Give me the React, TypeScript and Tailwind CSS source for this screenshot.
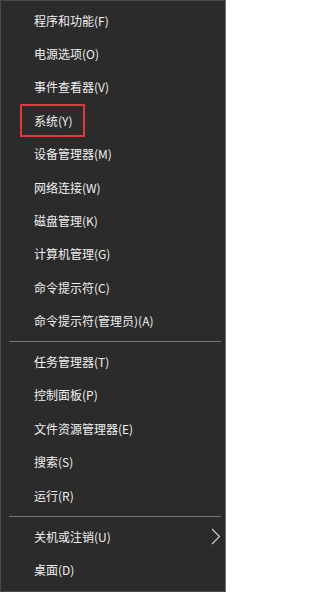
type Entry = { label: string; sub?: boolean; marked?: boolean } | 'sep';

const entries: Entry[] = [
    { label: '程序和功能(F)' },
    { label: '电源选项(O)' },
    { label: '事件查看器(V)' },
    { label: '系统(Y)', marked: true },
    { label: '设备管理器(M)' },
    { label: '网络连接(W)' },
    { label: '磁盘管理(K)' },
    { label: '计算机管理(G)' },
    { label: '命令提示符(C)' },
    { label: '命令提示符(管理员)(A)' },
    'sep',
    { label: '任务管理器(T)' },
    { label: '控制面板(P)' },
    { label: '文件资源管理器(E)' },
    { label: '搜索(S)' },
    { label: '运行(R)' },
    'sep',
    { label: '关机或注销(U)', sub: true },
    { label: '桌面(D)' },
];

const SubArrow = () => (
    <svg width="10" height="17" viewBox="0 0 10 17" className="ml-auto text-[#d4d4d4]">
        <polyline points="1,1 8.5,8.5 1,16" fill="none" stroke="currentColor" strokeWidth="1.1" />
    </svg>
);

const App = () => {
    return (
        <div
            className="w-[226px] h-[592px] bg-[#2b2b2b] border border-[#4a4a4a] border-r-[#6e6e6e] pt-[3px] flex flex-col text-[12px] text-[#f0f0f0]"
            style={{ fontFamily: '"Noto Sans CJK SC", "Noto Sans", sans-serif' }}
        >
            {entries.map((e, i) =>
                e === 'sep' ? (
                    <div key={i} className="h-[7.5px] flex items-center pl-[8px] pr-[4px] shrink-0">
                        <div className="h-px w-full bg-[#767676]" />
                    </div>
                ) : (
                    <div key={i} className="relative h-[33.4px] shrink-0 flex items-center pl-[33px] pr-[4px]">
                        <span className="leading-none">{e.label}</span>
                        {e.sub && <SubArrow />}
                        {e.marked && (
                            <div className="absolute left-[19px] top-[0px] w-[65px] h-[33px] border-2 border-[#e0393c]" />
                        )}
                    </div>
                )
            )}
        </div>
    );
};

export default App;
